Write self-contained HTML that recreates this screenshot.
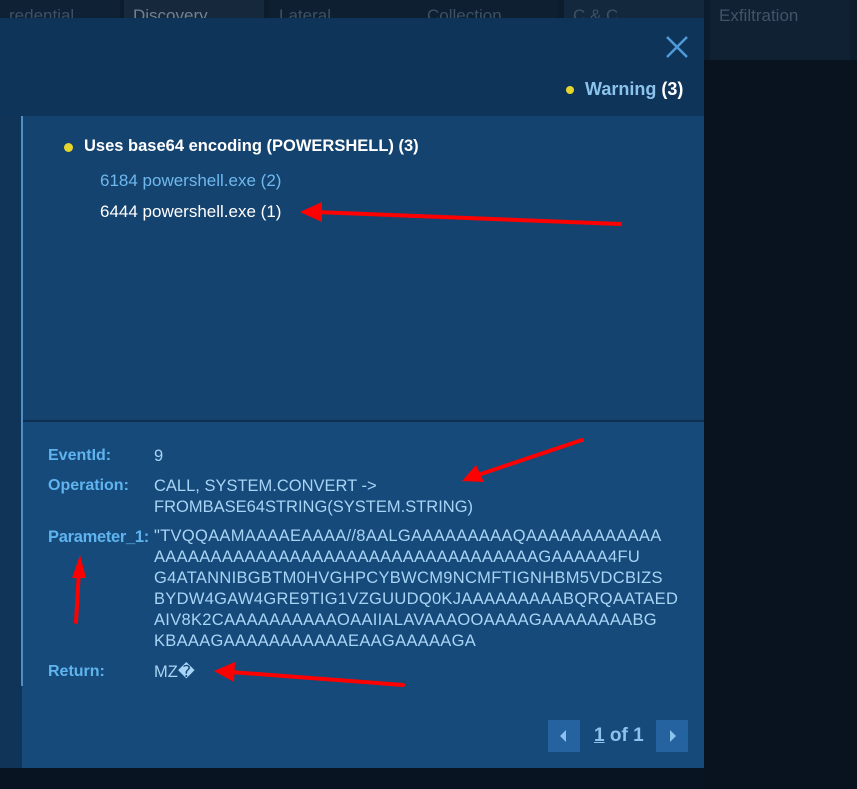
<!DOCTYPE html>
<html><head><style>
body{margin:0;width:857px;height:789px;background:#0a1828;font-family:"Liberation Sans",sans-serif;position:relative;overflow:hidden}
.tab{position:absolute;top:0;height:60px;color:#3b5166;font-size:17px;padding:6px 9px;box-sizing:border-box}
.abs{position:absolute}
.lbl{position:absolute;left:48px;color:#5fb4ef;font-weight:bold;font-size:16px}
.val{position:absolute;left:154px;color:#a8d4f5;font-size:16.5px;line-height:21px}
</style></head><body>
<div class="abs" style="left:0;top:0;width:857px;height:60px;background:#0c1c2c"></div>
<div class="tab" style="left:0;width:120px;background:#0f2235">redential</div>
<div class="tab" style="left:124px;width:140px;background:#16293c;color:#6f8192">Discovery</div>
<div class="tab" style="left:270px;width:150px;background:#0d1f31">Lateral</div>
<div class="tab" style="left:418px;width:140px;background:#0d1f31">Collection</div>
<div class="tab" style="left:564px;width:140px;background:#13283c">C &amp; C</div>
<div class="tab" style="left:710px;width:140px;background:#0f2133;color:#3f5468">Exfiltration</div>
<div class="abs" style="left:704px;top:60px;width:153px;height:729px;background:#08131f"></div>
<div class="abs" style="left:0;top:768px;width:704px;height:21px;background:#081421"></div>
<div class="abs" style="left:0;top:18px;width:704px;height:750px;background:#0f345a"></div>
<div class="abs" style="left:0;top:116px;width:22px;height:652px;background:#0f3457"></div>
<div class="abs" style="left:22px;top:116px;width:682px;height:652px;background:#164a7a"></div>
<div class="abs" style="left:22px;top:116px;width:682px;height:305px;background:#15436f"></div>
<div class="abs" style="left:22px;top:420px;width:682px;height:2px;background:#0e2f50"></div>
<div class="abs" style="left:21px;top:116px;width:2px;height:570px;background:#4e8fc6"></div>
<svg class="abs" style="left:664px;top:34px" width="26" height="26"><path d="M3 3L23 23M23 3L3 23" stroke="#4f9bd8" stroke-width="2.5"/></svg>
<div class="abs" style="left:566px;top:86px;width:8px;height:8px;border-radius:50%;background:#e4d62a"></div>
<div class="abs" style="left:585px;top:79px;font-size:18px;font-weight:bold;color:#8cc3ec">Warning <span style="color:#fff">(3)</span></div>
<div class="abs" style="left:64px;top:143px;width:9px;height:9px;border-radius:50%;background:#e4d62a"></div>
<div class="abs" style="left:84px;top:137px;font-size:16.5px;font-weight:bold;color:#fff">Uses base64 encoding (POWERSHELL) (3)</div>
<div class="abs" style="left:100px;top:171px;font-size:17px;color:#6fb8ee">6184 powershell.exe (2)</div>
<div class="abs" style="left:100px;top:202px;font-size:17px;color:#fff">6444 powershell.exe (1)</div>
<div class="lbl" style="top:447px">EventId:</div><div class="val" style="top:446px">9</div>
<div class="lbl" style="top:477px">Operation:</div><div class="val" style="top:476px">CALL, SYSTEM.CONVERT -&gt;<br>FROMBASE64STRING(SYSTEM.STRING)</div>
<div class="lbl" style="top:528px;font-size:16.5px;letter-spacing:-0.3px">Parameter_1:</div>
<div class="val" style="top:526px;background:#164a7a;width:530px;white-space:pre;letter-spacing:0.3px">"TVQQAAMAAAAEAAAA//8AALGAAAAAAAAAQAAAAAAAAAAAA
AAAAAAAAAAAAAAAAAAAAAAAAAAAAAAAAAAGAAAAA4FU
G4ATANNIBGBTM0HVGHPCYBWCM9NCMFTIGNHBM5VDCBIZS
BYDW4GAW4GRE9TIG1VZGUUDQ0KJAAAAAAAAABQRQAATAED
AIV8K2CAAAAAAAAAAOAAIIALAVAAAOOAAAAGAAAAAAAABG
KBAAAGAAAAAAAAAAAEAAGAAAAAGA</div>
<div class="lbl" style="top:663px">Return:</div><div class="val" style="top:662px">MZ&#xFFFD;</div>
<div class="abs" style="left:548px;top:720px;width:32px;height:32px;background:#2563a0"></div>
<svg class="abs" style="left:548px;top:720px" width="32" height="32"><path d="M18 10L12 16L18 22Z" fill="#8cc3ec"/></svg>
<div class="abs" style="left:594px;top:725px;font-size:19px;font-weight:bold;color:#8cc3ec"><span style="text-decoration:underline">1</span> of 1</div>
<div class="abs" style="left:656px;top:720px;width:32px;height:32px;background:#2563a0"></div>
<svg class="abs" style="left:656px;top:720px" width="32" height="32"><path d="M14 10L20 16L14 22Z" fill="#8cc3ec"/></svg>
<svg class="abs" style="left:0;top:0" width="857" height="789">
<g stroke="#f00" stroke-width="4" fill="#f00" stroke-linecap="round">
<line x1="620" y1="224" x2="315" y2="212"/><path d="M300 212L322 202L322 222Z" stroke="none"/>
<line x1="582" y1="440" x2="478" y2="475"/><path d="M462 481L476 465L484 482Z" stroke="none"/>
<line x1="76" y1="622" x2="79" y2="570"/><path d="M80 555L86 578L72 578Z" stroke="none"/>
<line x1="403" y1="685" x2="230" y2="672"/><path d="M214 671L235 662L234 682Z" stroke="none"/>
</g></svg>
</body></html>
